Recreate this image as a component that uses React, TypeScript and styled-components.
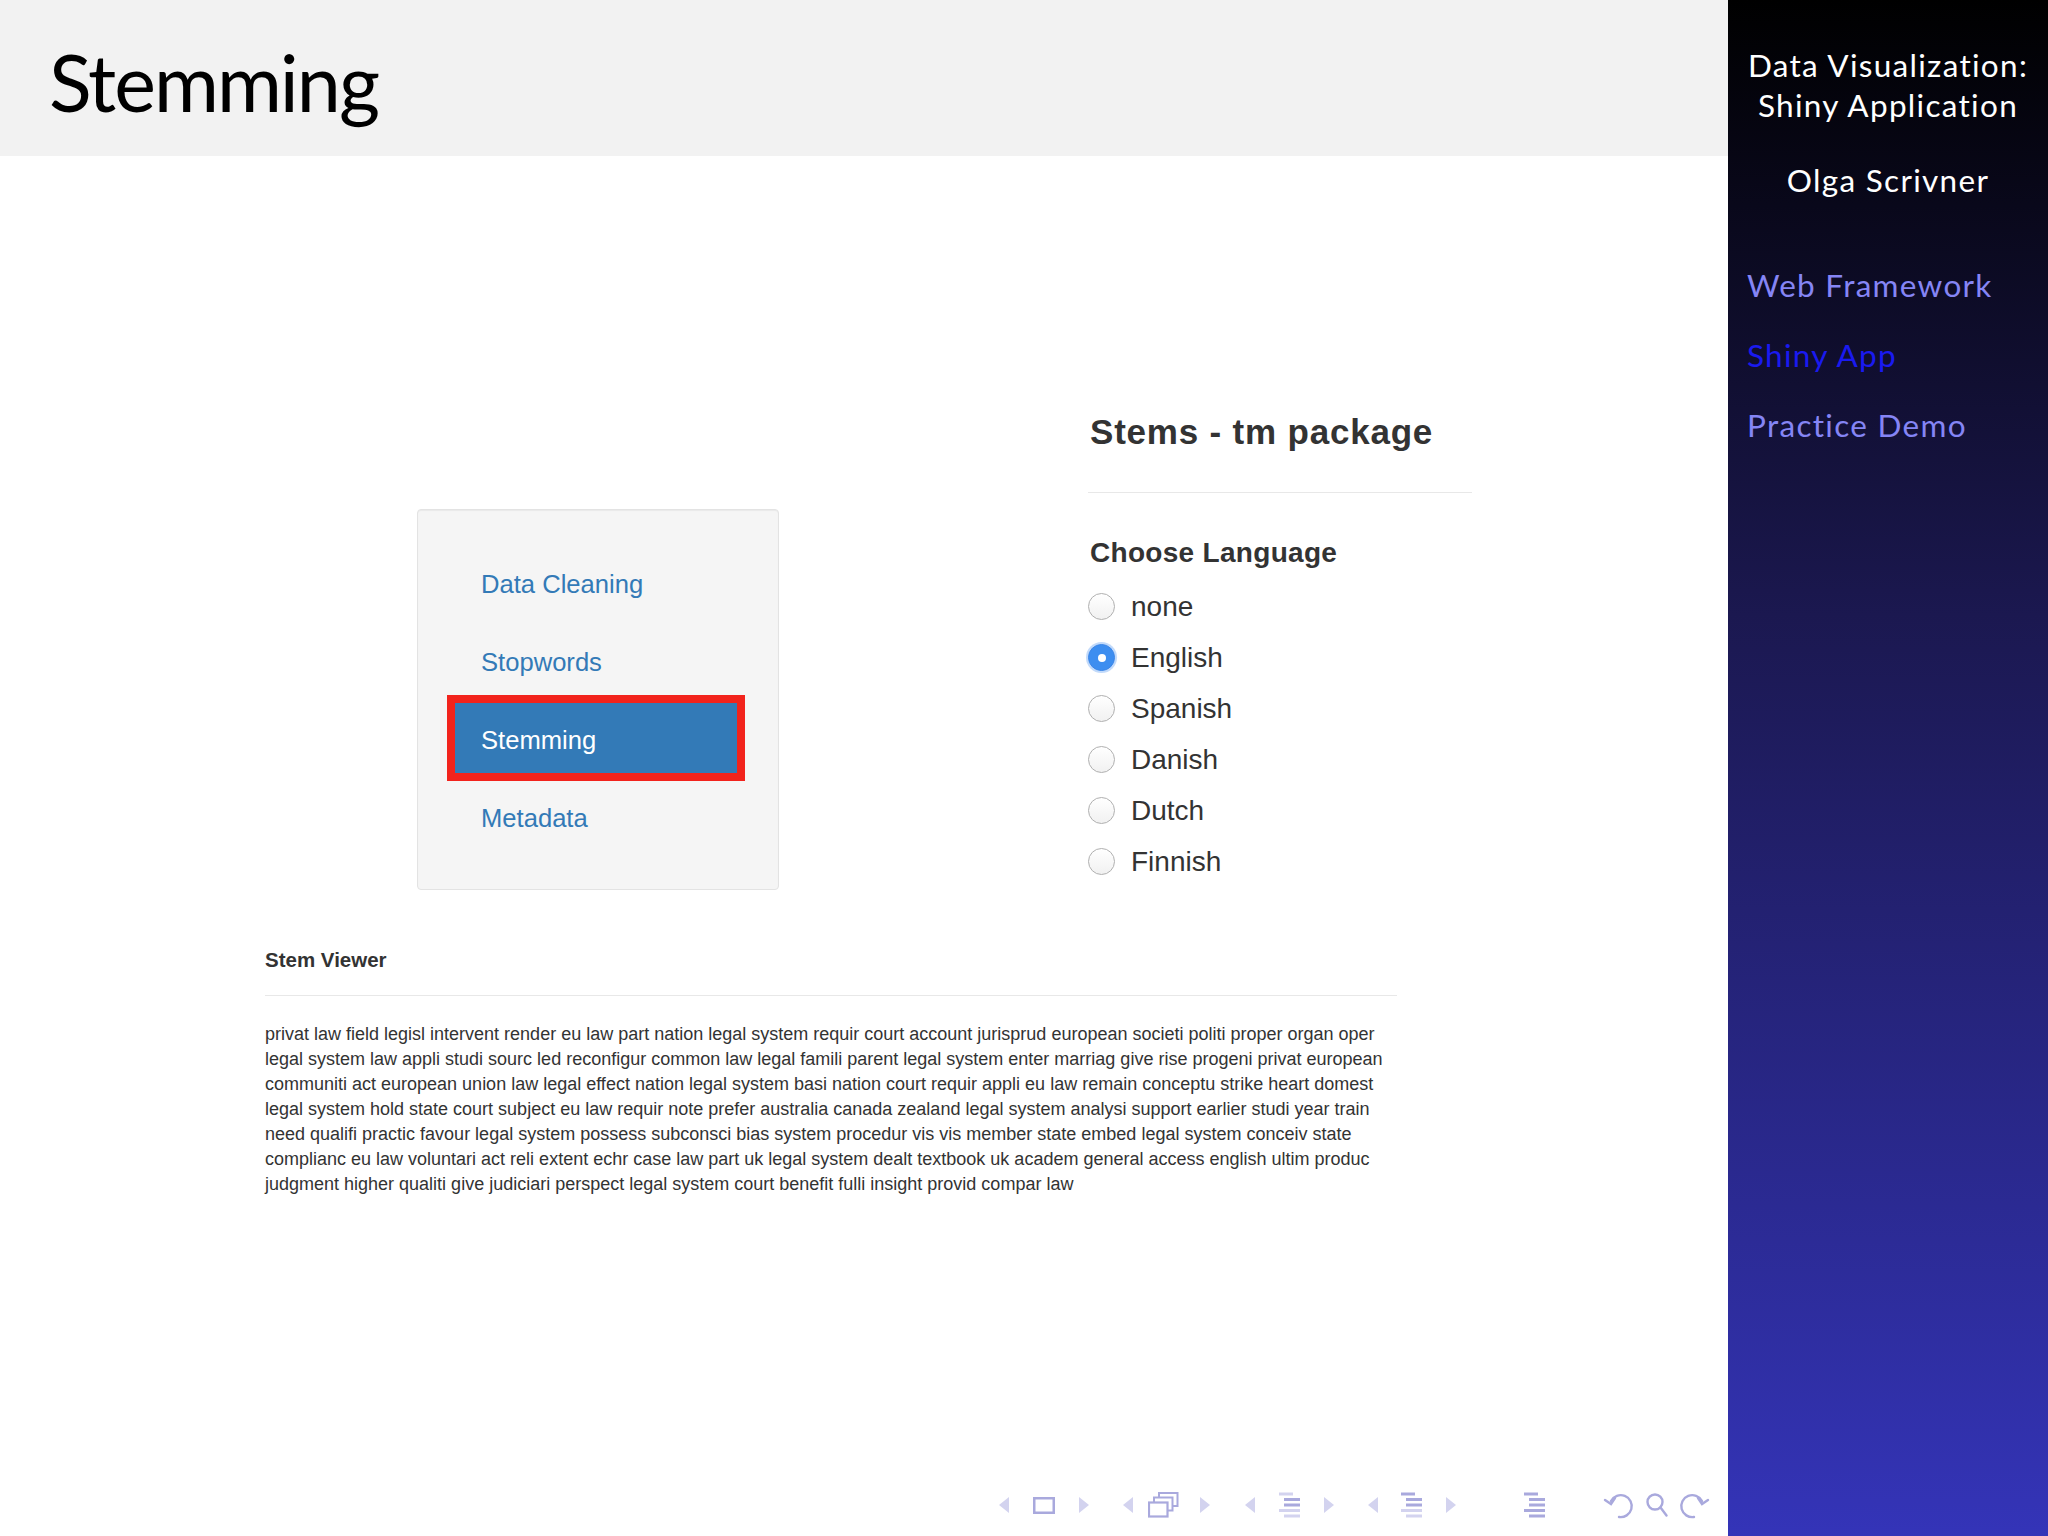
import React from 'react';
import styled, { createGlobalStyle } from 'styled-components';

const GlobalStyle = createGlobalStyle`
html, body {
  margin: 0;
  padding: 0;
  background: #ffffff;
}
`;

const Page = styled.div`
width: 2048px;
height: 1536px;
display: flex;
flex-direction: row;
overflow: hidden;
`;

const Main = styled.div`
width: 1728px;
display: flex;
flex-direction: column;
background: #ffffff;
`;

const Header = styled.div`
height: 156px;
box-sizing: border-box;
background: #f2f2f2;
padding: 42px 0 0 49px;
`;

const SlideTitle = styled.h1`
margin: 0;
font-family: Lato, "DejaVu Sans", sans-serif;
font-weight: 400;
font-size: 79px;
letter-spacing: -2px;
line-height: 1;
color: #000;
`;

const Body = styled.div`
flex: 1;
display: flex;
flex-direction: column;
`;

const ShinyContent = styled.div`
padding: 258px 0 0 265px;
font-family: "Liberation Sans", Arial, sans-serif;
color: #333;
`;

const TopRow = styled.div`
display: flex;
flex-direction: row;
align-items: flex-start;
`;

const Well = styled.div`
width: 362px;
box-sizing: border-box;
margin: 95px 0 0 152px;
padding: 37px 41px 38px 37px;
background: #f5f5f5;
border: 1px solid #e3e3e3;
border-radius: 4px;
box-shadow: inset 0 1px 1px rgba(0, 0, 0, 0.05);
display: flex;
flex-direction: column;
gap: 8px;
`;

const Pill = styled.div<{ $active?: boolean }>`
height: 70px;
box-sizing: border-box;
display: flex;
align-items: center;
padding: 5px 0 0 26px;
font-size: 25.6px;
line-height: 1;
color: ${(p) => (p.$active ? '#ffffff' : '#337ab7')};
background: ${(p) => (p.$active ? '#337ab7' : 'transparent')};
outline: ${(p) => (p.$active ? '8px solid #f2231c' : 'none')};
`;

const RightCol = styled.div`
margin-left: 309px;
display: flex;
flex-direction: column;
`;

const PanelTitle = styled.h4`
margin: 0 0 0 2px;
font-size: 35px;
font-weight: 700;
letter-spacing: 0.8px;
line-height: 1;
color: #333;
`;

const Rule = styled.div<{ $width: number }>`
width: ${(p) => p.$width}px;
height: 0;
border-top: 1px solid #e8e8e8;
`;

const TitleRule = styled(Rule)`
margin-top: 43px;
`;

const ControlLabel = styled.div`
margin: 46px 0 14px 2px;
font-size: 28px;
font-weight: 700;
letter-spacing: 0.3px;
line-height: 1;
color: #333;
`;

const RadioRow = styled.div`
height: 51px;
display: flex;
align-items: center;
gap: 16px;
`;

const RadioCircle = styled.span<{ $checked?: boolean }>`
width: 27px;
height: 27px;
box-sizing: border-box;
border-radius: 50%;
display: flex;
align-items: center;
justify-content: center;
border: ${(p) => (p.$checked ? '1px solid #3b86e8' : '1.5px solid #b0b0b0')};
background: ${(p) => (p.$checked ? '#3d8ef0' : 'linear-gradient(#ffffff, #f1f1f1)')};
box-shadow: ${(p) => (p.$checked ? '0 0 0 2px rgba(80, 150, 240, 0.35)' : 'none')};
`;

const RadioDot = styled.span`
width: 8px;
height: 8px;
border-radius: 50%;
background: #ffffff;
`;

const RadioText = styled.span`
font-size: 28px;
line-height: 1;
color: #333;
`;

const ViewerTitle = styled.h5`
margin: 60px 0 0 0;
font-size: 20.5px;
font-weight: 700;
line-height: 1;
color: #333;
`;

const ViewerRule = styled(Rule)`
margin-top: 24px;
`;

const StemText = styled.div`
margin-top: 26px;
font-size: 18px;
line-height: 25px;
color: #333;
`;

const StemLine = styled.div`
white-space: nowrap;
`;

const NavBar = styled.div`
margin-top: auto;
margin-bottom: 18px;
height: 26px;
padding-left: 998px;
display: flex;
flex-direction: row;
align-items: center;
`;

const NavItem = styled.span<{ $gap: number }>`
display: flex;
margin-left: ${(p) => p.$gap}px;
`;

const Sidebar = styled.div`
width: 320px;
box-sizing: border-box;
padding: 45px 0 0 19px;
background: linear-gradient(to bottom, #000000 0%, #1b1850 40%, #3434b8 100%);
display: flex;
flex-direction: column;
font-family: Lato, "DejaVu Sans", sans-serif;
font-size: 31.5px;
letter-spacing: 1.3px;
line-height: 40px;
`;

const SideTitle = styled.div`
margin-left: -19px;
text-align: center;
color: #ffffff;
`;

const SideAuthor = styled(SideTitle)`
margin-top: 35px;
`;

const SideSection = styled.div<{ $current?: boolean; $first?: boolean }>`
margin-top: ${(p) => (p.$first ? 65 : 30)}px;
color: ${(p) => (p.$current ? '#1a1af0' : '#8585f5')};
`;

const ICON = '#a9a9dd';
const FAINT = '#d3d3ef';

const ArrowLeft = () => (
  <svg width="12" height="16" viewBox="0 0 12 16">
    <path d="M11 0 L1 8 L11 16 Z" fill={FAINT} />
  </svg>
);

const ArrowRight = () => (
  <svg width="12" height="16" viewBox="0 0 12 16">
    <path d="M1 0 L11 8 L1 16 Z" fill={FAINT} />
  </svg>
);

const FrameIcon = () => (
  <svg width="22" height="17" viewBox="0 0 22 17">
    <rect x="1.25" y="1.25" width="19.5" height="14.5" fill="none" stroke={ICON} strokeWidth="2.5" />
  </svg>
);

const WindowsIcon = () => (
  <svg width="31" height="26" viewBox="0 0 31 26">
    <rect x="11" y="1" width="18.5" height="13" fill="#fff" stroke={ICON} strokeWidth="2" />
    <rect x="6" y="5.5" width="18.5" height="13" fill="#fff" stroke={ICON} strokeWidth="2" />
    <rect x="1" y="10.5" width="18.5" height="14" fill="#fff" stroke={ICON} strokeWidth="2.2" />
  </svg>
);

const LinesIcon: React.FC<{ shades: string[] }> = ({ shades }) => (
  <svg width="23" height="26" viewBox="0 0 23 26">
    <rect x="1" y="0.5" width="14" height="3" fill={shades[0]} />
    <rect x="6" y="6" width="16" height="3" fill={shades[1]} />
    <rect x="6" y="11.5" width="16" height="3" fill={shades[2]} />
    <rect x="1" y="17" width="21" height="3" fill={shades[3]} />
    <rect x="6" y="22.5" width="16" height="3" fill={shades[4]} />
  </svg>
);

const UndoIcon: React.FC<{ flip?: boolean }> = ({ flip }) => (
  <svg width="32" height="28" viewBox="0 0 32 28">
    <g transform={flip ? 'translate(32 0) scale(-1 1)' : undefined} fill="none" stroke={ICON} strokeWidth="2.4" strokeLinecap="round">
      <path d="M8 10 A 11 11 0 1 1 16 26" />
      <path d="M2 9 L8 13 L12 7" />
    </g>
  </svg>
);

const SearchIcon = () => (
  <svg width="22" height="26" viewBox="0 0 22 26">
    <g fill="none" stroke={ICON} strokeWidth="2.4" strokeLinecap="round">
      <circle cx="9" cy="10" r="7.5" />
      <path d="M14.5 15.5 L20.5 23.5" />
    </g>
  </svg>
);

const languages = ['none', 'English', 'Spanish', 'Danish', 'Dutch', 'Finnish'];

const stemLines = [
  'privat law field legisl intervent render eu law part nation legal system requir court account jurisprud european societi politi proper organ oper',
  'legal system law appli studi sourc led reconfigur common law legal famili parent legal system enter marriag give rise progeni privat european',
  'communiti act european union law legal effect nation legal system basi nation court requir appli eu law remain conceptu strike heart domest',
  'legal system hold state court subject eu law requir note prefer australia canada zealand legal system analysi support earlier studi year train',
  'need qualifi practic favour legal system possess subconsci bias system procedur vis vis member state embed legal system conceiv state',
  'complianc eu law voluntari act reli extent echr case law part uk legal system dealt textbook uk academ general access english ultim produc',
  'judgment higher qualiti give judiciari perspect legal system court benefit fulli insight provid compar law',
];

const App: React.FC = () => {
  return (
    <Page>
      <GlobalStyle />
      <Main>
        <Header>
          <SlideTitle>Stemming</SlideTitle>
        </Header>
        <Body>
          <ShinyContent>
            <TopRow>
              <Well>
                <Pill>Data Cleaning</Pill>
                <Pill>Stopwords</Pill>
                <Pill $active>Stemming</Pill>
                <Pill>Metadata</Pill>
              </Well>
              <RightCol>
                <PanelTitle>Stems - tm package</PanelTitle>
                <TitleRule $width={384} />
                <ControlLabel>Choose Language</ControlLabel>
                {languages.map((lang) => (
                  <RadioRow key={lang}>
                    <RadioCircle $checked={lang === 'English'}>
                      {lang === 'English' && <RadioDot />}
                    </RadioCircle>
                    <RadioText>{lang}</RadioText>
                  </RadioRow>
                ))}
              </RightCol>
            </TopRow>
            <ViewerTitle>Stem Viewer</ViewerTitle>
            <ViewerRule $width={1132} />
            <StemText>
              {stemLines.map((line, i) => (
                <StemLine key={i}>{line}</StemLine>
              ))}
            </StemText>
          </ShinyContent>
          <NavBar>
            <NavItem $gap={0}><ArrowLeft /></NavItem>
            <NavItem $gap={23}><FrameIcon /></NavItem>
            <NavItem $gap={23}><ArrowRight /></NavItem>
            <NavItem $gap={32}><ArrowLeft /></NavItem>
            <NavItem $gap={14}><WindowsIcon /></NavItem>
            <NavItem $gap={20}><ArrowRight /></NavItem>
            <NavItem $gap={33}><ArrowLeft /></NavItem>
            <NavItem $gap={22}><LinesIcon shades={[FAINT, ICON, ICON, FAINT, FAINT]} /></NavItem>
            <NavItem $gap={22}><ArrowRight /></NavItem>
            <NavItem $gap={32}><ArrowLeft /></NavItem>
            <NavItem $gap={21}><LinesIcon shades={[ICON, ICON, ICON, FAINT, FAINT]} /></NavItem>
            <NavItem $gap={22}><ArrowRight /></NavItem>
            <NavItem $gap={66}><LinesIcon shades={[ICON, ICON, ICON, ICON, ICON]} /></NavItem>
            <NavItem $gap={57}><UndoIcon /></NavItem>
            <NavItem $gap={11}><SearchIcon /></NavItem>
            <NavItem $gap={10}><UndoIcon flip /></NavItem>
          </NavBar>
        </Body>
      </Main>
      <Sidebar>
        <SideTitle>
          Data Visualization:
          <br />
          Shiny Application
        </SideTitle>
        <SideAuthor>Olga Scrivner</SideAuthor>
        <SideSection $first>Web Framework</SideSection>
        <SideSection $current>Shiny App</SideSection>
        <SideSection>Practice Demo</SideSection>
      </Sidebar>
    </Page>
  );
};

export default App;
